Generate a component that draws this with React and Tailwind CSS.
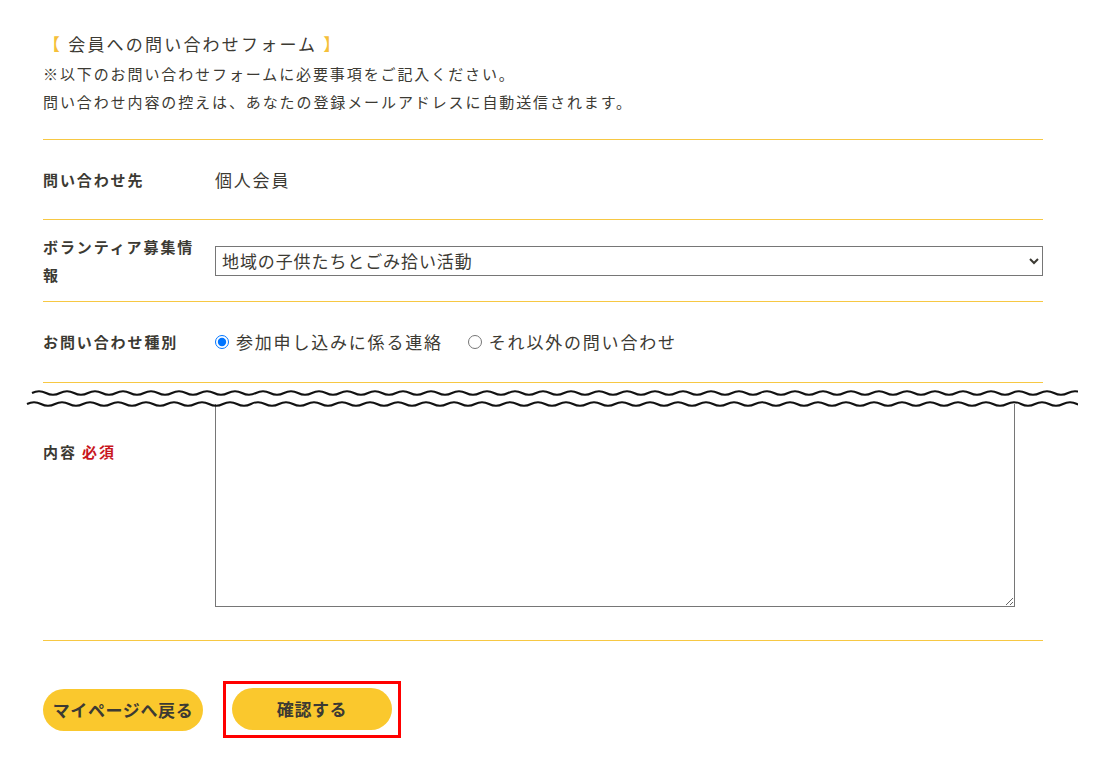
import React from "react";

function wavePath(y, x0, width, period, amp) {
  let d = `M ${x0} ${y}`;
  const half = period / 2;
  let x = x0;
  let up = true;
  while (x < x0 + width) {
    const cx = x + half / 2;
    const cy = up ? y - amp * 2 : y + amp * 2;
    d += ` Q ${cx} ${cy} ${x + half} ${y}`;
    x += half;
    up = !up;
  }
  return d;
}

function Row({ label, children, className = "" }) {
  return (
    <div className={"flex border-t border-[#f7c843] " + className}>
      <div className="w-[172px] shrink-0 text-[15px] font-bold leading-[28px] tracking-[1.9px] pr-[15px]">{label}</div>
      <div className="flex-1">{children}</div>
    </div>
  );
}

export default function App() {
  return (
    <div className="relative w-[1100px] min-h-[766px] bg-white font-['Noto_Sans_CJK_JP',sans-serif] text-[#3c3a33]">
      <div className="ml-[43px] w-[1000px] pt-[30px]">
        <h2 className="text-[17px] leading-[28px] tracking-[2.2px]">
          <span className="text-[#f5c03a]">【</span> 会員への問い合わせフォーム <span className="text-[#f5c03a]">】</span>
        </h2>
        <p className="mt-[2px] text-[15px] leading-[28px] tracking-[1.9px]">
          ※以下のお問い合わせフォームに必要事項をご記入ください。
          <br />
          問い合わせ内容の控えは、あなたの登録メールアドレスに自動送信されます。
        </p>

        <div className="mt-[23px]">
          <Row label="問い合わせ先" className="h-[80px] items-center">
            <span className="text-[17px] tracking-[1.8px]">個人会員</span>
          </Row>
          <Row label="ボランティア募集情報" className="h-[82px] items-center">
            <select className="w-[828px] h-[30px] border border-[#767676] bg-white text-[17px] tracking-[0.9px] pl-[2px]">
              <option>地域の子供たちとごみ拾い活動</option>
            </select>
          </Row>
          <Row label="お問い合わせ種別" className="h-[81px] items-center">
            <div className="flex items-center text-[17px] tracking-[1.8px]">
              <label className="flex items-center mr-[25px]">
                <input type="radio" name="kind" defaultChecked className="m-0 mr-[7px] w-[14px] h-[14px]" />
                参加申し込みに係る連絡
              </label>
              <label className="flex items-center">
                <input type="radio" name="kind" className="m-0 mr-[7px] w-[14px] h-[14px]" />
                それ以外の問い合わせ
              </label>
            </div>
          </Row>
          <Row label={<span className="inline-block pt-[55px] font-bold">内容 <span className="text-[#c8161d]">必須</span></span>} className="border-b pb-[33px]">
            <textarea className="mt-[15px] block w-[800px] h-[209px] border border-[#767676] bg-white resize" />
          </Row>
        </div>

        <div className="mt-[40px] flex items-center">
          <button className="w-[160px] h-[42px] rounded-full bg-[#fac82d] text-[17px] tracking-[0.6px] font-bold text-[#3c3a33]">マイページへ戻る</button>
          <div className="ml-[20px] border-[3px] border-[#ff0000] pt-[4px] pb-[5px] px-[6px]">
            <button className="block w-[160px] h-[42px] rounded-full bg-[#fac82d] text-[17px] tracking-[0.6px] font-bold text-[#3c3a33]">確認する</button>
          </div>
        </div>
      </div>

      <svg className="absolute left-[24px] top-[384px]" width="1054" height="26" viewBox="0 0 1054 26">
        <rect x="0" y="9" width="1054" height="11" fill="#ffffff" />
        <path d={wavePath(9, 8, 1046, 28, 1.8)} fill="none" stroke="#111" strokeWidth="2" />
        <path d={wavePath(20, 3, 1051, 28, 1.8)} fill="none" stroke="#111" strokeWidth="2" />
      </svg>
    </div>
  );
}
